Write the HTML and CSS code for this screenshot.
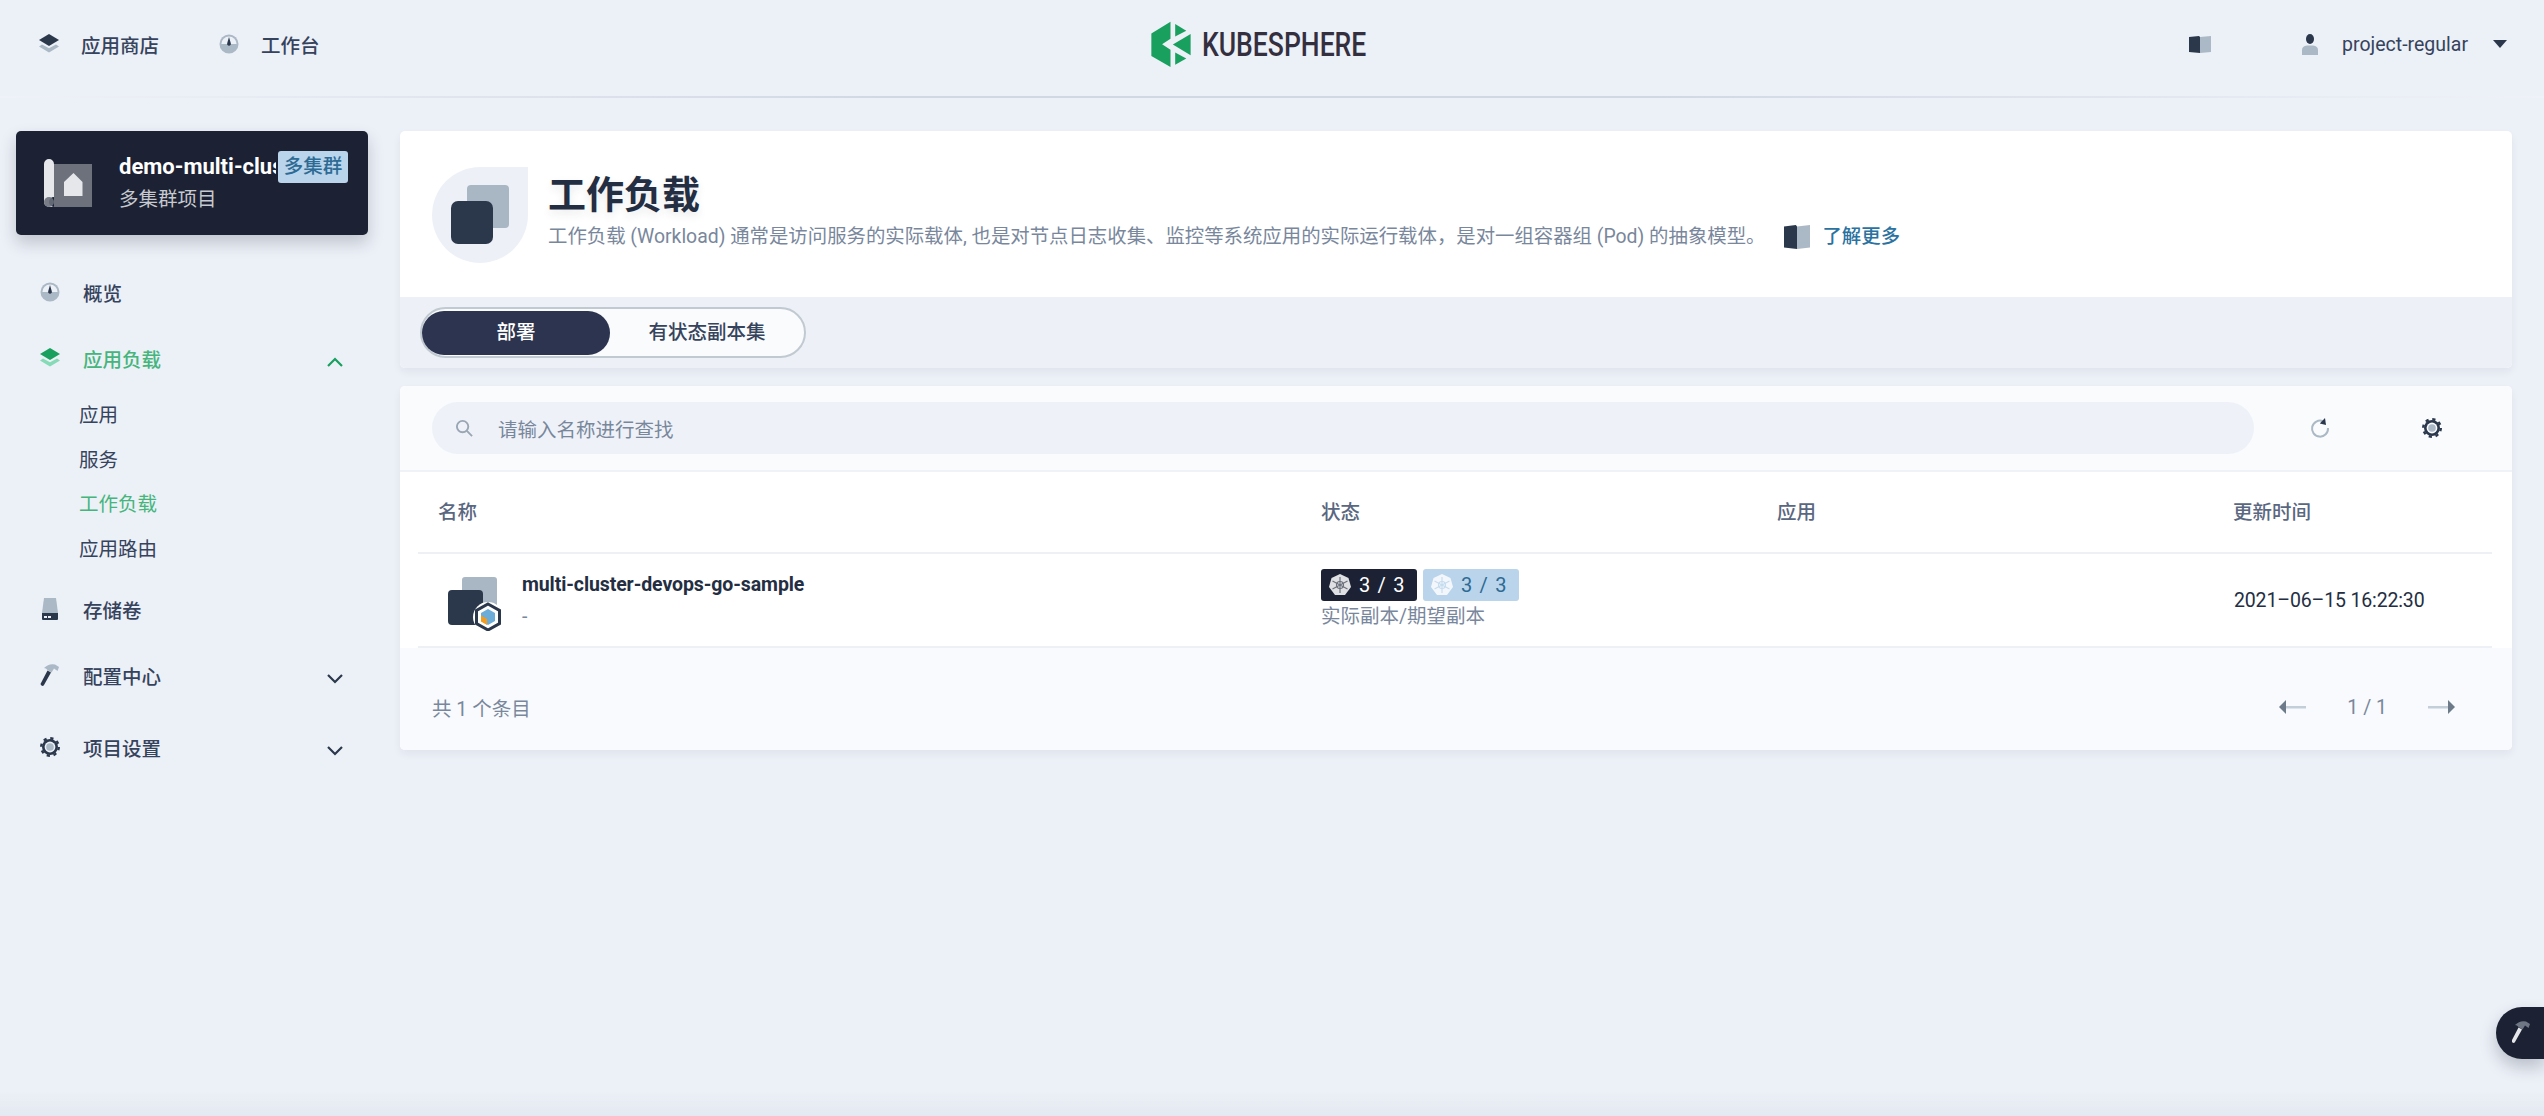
FILE: index.html
```html
<!DOCTYPE html>
<html lang="zh-CN">
<head>
    <meta charset="UTF-8">
    <title>工作负载 - KubeSphere</title>
    <link rel="stylesheet" href="styles.css">
</head>
<body>
    <svg class="defs" width="0" height="0">
        <symbol id="i-layers" viewBox="0 0 20 20">
            <path class="light" d="M3 10.6 10 14.2 17 10.6 20 12.4 10 18.6 0 12.4Z"/>
            <path class="dark" d="M10 0 20 6 10 12 0 6Z"/>
        </symbol>
        <symbol id="i-gauge" viewBox="0 0 20 20">
            <circle class="light" cx="10" cy="10" r="9.5"/>
            <path class="hole" d="M2.4 10a7.6 7.6 0 0 1 15.2 0Z"/>
            <path class="dark" d="M10 3 11.8 9.2a1.9 1.9 0 1 1-3.6 0Z"/>
        </symbol>
        <symbol id="i-book" viewBox="0 0 22 17" preserveAspectRatio="none">
            <path class="dark" d="M0 1 10 0 11 1V17L0 16Z"/>
            <path class="light" d="M11 1 22 0V16L11 17Z"/>
        </symbol>
        <symbol id="i-user" viewBox="0 0 16 21">
            <ellipse class="dark" cx="8" cy="5" rx="4" ry="5"/>
            <path class="light" d="M0 21V16Q0 12 5 11.500H11Q16 12 16 16V21Z"/>
        </symbol>
        <symbol id="i-disk" viewBox="0 0 16 22">
            <path class="light" d="M2 0H14L16 15H0Z"/>
            <path class="dark" d="M0 15H16V21Q16 22 15 22H1Q0 22 0 21Z"/>
            <path class="hole" d="M2 18H5V20H2ZM6 18H9V20H6Z"/>
        </symbol>
        <symbol id="i-hammer" viewBox="0 0 18 22">
            <path class="light" d="M3 4Q8-1 14 0.500L18 3 16.500 7 13 4.500 10.500 8.500 6.500 6Q5 4 3 4Z"/>
            <path class="dark" d="M6.500 6.500 10 8.500 3 21Q2 22.500 0.500 21.500T0 19Z"/>
        </symbol>
        <symbol id="i-gear" viewBox="0 0 20 20">
            <circle class="dark" cx="10" cy="10" r="8"/>
            <circle class="gear-teeth" cx="10" cy="10" r="8.800"/>
            <circle class="hole" cx="10" cy="10" r="5.400"/>
            <circle class="light" cx="10" cy="10" r="3.800"/>
        </symbol>
        <symbol id="i-wheel" viewBox="0 0 22 22">
            <path class="wheel-body" d="M11 0 19.500 4 22 13 16 21H6L0 13 2.500 4Z"/>
            <g class="wheel-spokes">
                <circle cx="11" cy="11" r="3.500"/>
                <path d="M11 3V19M3.500 7 18.500 15M18.500 7 3.500 15"/>
            </g>
        </symbol>
    </svg>

    <header class="topbar">
        <nav class="topbar-left">
            <a class="top-link"><svg class="icon-20"><use href="#i-layers"/></svg>应用商店</a>
            <a class="top-link"><svg class="icon-20"><use href="#i-gauge"/></svg>工作台</a>
        </nav>
        <div class="logo">
            <svg class="logo-mark" viewBox="150 66 122 140">
                <path d="M208 68 151 103V170L208 203V152L183 135 208 119Z"/>
                <path d="M222 75 255 95 222 112Z"/>
                <path d="M268 105V168L215 136Z"/>
                <path d="M222 160 255 178 222 196Z"/>
            </svg>
            <span class="logo-text">KUBESPHERE</span>
        </div>
        <div class="topbar-right">
            <svg class="icon-book"><use href="#i-book"/></svg>
            <svg class="icon-user"><use href="#i-user"/></svg>
            <span class="user-name">project-regular</span>
            <span class="caret"></span>
        </div>
    </header>

    <div class="page">
        <aside class="sidebar">
            <div class="project-card">
                <svg class="project-icon" viewBox="0 0 48 48">
                    <path fill="#6c717c" d="M10 5H48V48H10Z"/>
                    <path fill="#e6e7ea" d="M0 5a5 5 0 0 1 10 0V38H10a5 5 0 1 0 0 10H5a5 5 0 0 1-5-5Z"/>
                    <path fill="#6c717c" d="M5 38a5 5 0 0 1 5 5 5 5 0 0 1-5 5 5 5 0 0 1-5-5 5 5 0 0 1 5-5Z" opacity=".9"/>
                    <path fill="#e6e7ea" d="M20 23 29.500 14 38.500 23V37H20Z"/>
                </svg>
                <div class="project-text">
                    <div class="project-name">demo-multi-cluster</div>
                    <div class="project-desc">多集群项目</div>
                </div>
                <span class="project-tag">多集群</span>
            </div>

            <nav class="nav">
                <a class="nav-item"><svg class="icon-nav"><use href="#i-gauge"/></svg>概览</a>
                <a class="nav-item active">
                    <svg class="icon-nav"><use href="#i-layers"/></svg>应用负载
                    <svg class="chevron up" viewBox="0 0 16 10"><path d="M1 9 8 2 15 9"/></svg>
                </a>
                <div class="subnav">
                    <a class="sub-item">应用</a>
                    <a class="sub-item">服务</a>
                    <a class="sub-item active">工作负载</a>
                    <a class="sub-item">应用路由</a>
                </div>
                <a class="nav-item"><svg class="icon-nav"><use href="#i-disk"/></svg>存储卷</a>
                <a class="nav-item">
                    <svg class="icon-nav"><use href="#i-hammer"/></svg>配置中心
                    <svg class="chevron" viewBox="0 0 16 10"><path d="M1 1 8 8 15 1"/></svg>
                </a>
                <a class="nav-item nav-item-last">
                    <svg class="icon-nav"><use href="#i-gear"/></svg>项目设置
                    <svg class="chevron" viewBox="0 0 16 10"><path d="M1 1 8 8 15 1"/></svg>
                </a>
            </nav>
        </aside>

        <main class="content">
            <section class="banner">
                <div class="banner-head">
                    <div class="banner-icon">
                        <svg viewBox="0 0 58 60" width="58" height="60">
                            <rect fill="#a9b6c3" x="16" y="0" width="42" height="43" rx="4"/>
                            <rect fill="#2b384c" x="0" y="16" width="42" height="43" rx="7"/>
                        </svg>
                    </div>
                    <div class="banner-text">
                        <h1>工作负载</h1>
                        <p><span>工作负载 (Workload) 通常是访问服务的实际载体, 也是对节点日志收集、监控等系统应用的实际运行载体，是对一组容器组 (Pod) 的抽象模型。</span><svg class="learn-icon"><use href="#i-book"/></svg><a class="learn-more">了解更多</a></p>
                    </div>
                </div>
                <div class="tabs-band">
                    <div class="tabs">
                        <a class="tab active">部署</a>
                        <a class="tab">有状态副本集</a>
                    </div>
                </div>
            </section>

            <section class="table-card">
                <div class="toolbar">
                    <div class="search">
                        <svg class="search-icon" viewBox="0 0 20 20">
                            <circle cx="8" cy="8" r="6"/>
                            <path d="M12.500 12.500 18 18"/>
                        </svg>
                        <span>请输入名称进行查找</span>
                    </div>
                    <svg class="refresh" viewBox="0 0 20 20">
                        <path d="M13 3.200A8 8 0 1 0 18 10"/>
                        <path class="refresh-tip" d="M15 0 16 7 9.800 5.600Z"/>
                    </svg>
                    <svg class="icon-20 toolbar-gear"><use href="#i-gear"/></svg>
                </div>

                <div class="row row-head">
                    <div>名称</div>
                    <div>状态</div>
                    <div>应用</div>
                    <div>更新时间</div>
                </div>

                <div class="row row-body">
                    <div class="name-cell">
                        <svg class="workload-icon" viewBox="0 0 54 54">
                            <rect fill="#a9b6c3" x="14" y="0" width="35" height="36" rx="3"/>
                            <rect fill="#2b384c" x="0" y="13" width="35" height="35" rx="4"/>
                            <circle fill="#fff" cx="40" cy="40" r="15"/>
                            <path fill="#fff" stroke="#2b384c" stroke-width="3" d="M40 27 51.500 33.500V46.500L40 53 28.500 46.500V33.500Z"/>
                            <path fill="#6cacd9" d="M40 32 47 36V44L40 48 33 44V36Z"/>
                            <path fill="#f29b1f" d="M33 38.500 39 42V48L33 44.500Z"/>
                        </svg>
                        <div>
                            <div class="workload-name">multi-cluster-devops-go-sample</div>
                            <div class="workload-desc">-</div>
                        </div>
                    </div>
                    <div class="status-cell">
                        <div class="badges">
                            <span class="badge badge-dark"><svg class="wheel"><use href="#i-wheel"/></svg>3 / 3</span>
                            <span class="badge badge-light"><svg class="wheel"><use href="#i-wheel"/></svg>3 / 3</span>
                        </div>
                        <div class="status-note">实际副本/期望副本</div>
                    </div>
                    <div></div>
                    <div class="date-cell">2021–06–15 16:22:30</div>
                </div>

                <div class="table-foot">
                    <span>共 1 个条目</span>
                    <div class="pager">
                        <svg class="arrow" viewBox="0 0 27 14"><path class="arrow-line" d="M6 6H27V8.500H6Z"/><path class="arrow-head" d="M0 7 7 0V14Z"/></svg>
                        <span class="page-num">1 / 1</span>
                        <svg class="arrow" viewBox="0 0 27 14"><path class="arrow-line" d="M0 6H21V8.500H0Z"/><path class="arrow-head" d="M27 7 20 0V14Z"/></svg>
                    </div>
                </div>
            </section>
        </main>
    </div>

    <div class="float-tool">
        <svg viewBox="0 0 18 22" width="18" height="22">
            <path fill="#6f7684" d="M3 4Q8-1 14 0.500L18 3 16.500 7 13 4.500 10.500 8.500 6.500 6Q5 4 3 4Z"/>
            <path fill="#e4e6ea" d="M6.500 6.500 10 8.500 3 21Q2 22.500 0.500 21.500T0 19Z"/>
        </svg>
    </div>
</body>
</html>
```

FILE: styles.css
```css
* { margin: 0; padding: 0; box-sizing: border-box; }

html, body {
    height: 100%;
    overflow: hidden;
}

body {
    font-family: Roboto, "Noto Sans CJK SC", sans-serif;
    font-size: 19.5px;
    color: #36435c;
    background: #ecf0f7;
}

/* faint shade along the bottom of the window */
body::after {
    content: "";
    position: fixed;
    left: 0;
    right: 0;
    bottom: 0;
    height: 24px;
    background: linear-gradient(180deg, rgba(225, 230, 239, 0), #e4e9f1);
}

a { color: inherit; }

h1, p { font-weight: normal; }

.defs { position: absolute; }

/* two tone icons, the vars reach inside <use> */
.dark { fill: var(--icon-dark, #2b384c); }
.light { fill: var(--icon-light, #abb8c5); }
.hole { fill: var(--icon-hole, #ecf0f7); }

.gear-teeth {
    fill: none;
    stroke: var(--icon-dark, #2b384c);
    stroke-width: 2.4;
    stroke-dasharray: 3.2 3.71;
}

.icon-20 { width: 20px; height: 20px; flex: none; }
.icon-nav { width: 20px; height: 22px; flex: none; }

/* top bar */
.topbar {
    height: 98px;
    padding: 0 37px 8px 39px;
    display: grid;
    grid-template-columns: 1fr auto 1fr;
    align-items: center;
    border-bottom: 2px solid;
    border-image: linear-gradient(90deg, #eff2f8 0%, #d2d8e3 35%, #d2d8e3 65%, #eff2f8 100%) 1;
}

.topbar-left {
    display: flex;
    gap: 60px;
}

.top-link {
    display: flex;
    align-items: center;
    gap: 22px;
    font-weight: 500;
}

.logo {
    display: flex;
    align-items: center;
    gap: 10px;
    margin: 0 26px 0 -3px;
}

.logo-mark {
    width: 41px;
    height: 47px;
    fill: #19a05f;
}

.logo-text {
    width: 165px;
    font-size: 34px;
    font-weight: 500;
    line-height: 1;
    color: #342f3f;
    white-space: nowrap;
    transform: scaleX(.78);
    transform-origin: left center;
}

.topbar-right {
    display: flex;
    align-items: center;
    justify-content: flex-end;
}

.icon-book { width: 22px; height: 17px; flex: none; }

.icon-user {
    width: 16px;
    height: 21px;
    margin-left: 91px;
}

.user-name { margin-left: 24px; }

.caret {
    margin-left: 25px;
    border: 7.5px solid transparent;
    border-top: 8px solid #2b384c;
    border-bottom: 0;
}

/* page */
.page {
    display: flex;
    padding: 33px 32px 0 16px;
}

.sidebar {
    width: 352px;
    margin-right: 32px;
    flex: none;
}

.project-card {
    position: relative;
    height: 104px;
    padding: 0 28px;
    display: flex;
    align-items: center;
    gap: 27px;
    background: #1c2233;
    border-radius: 5px;
    box-shadow: 0 8px 16px rgba(36, 46, 66, .22);
}

.project-icon { width: 48px; height: 48px; flex: none; }

.project-text {
    width: 157px;
    overflow: hidden;
    white-space: nowrap;
}

.project-name {
    font-size: 22px;
    font-weight: 700;
    line-height: 32px;
    color: #fff;
}

.project-desc {
    margin-top: 2px;
    line-height: 30px;
    color: #c6c9cf;
}

.project-tag {
    position: absolute;
    top: 20px;
    right: 20px;
    width: 70px;
    height: 32px;
    font-weight: 500;
    line-height: 31px;
    text-align: center;
    color: #2d6a94;
    background: #b9d4eb;
    border-radius: 3px;
}

/* side nav */
.nav { padding: 13px 0 0 24px; }

.nav-item {
    height: 44px;
    margin-top: 22px;
    display: flex;
    align-items: center;
    gap: 23px;
    font-weight: 500;
}

.nav-item-last { margin-top: 28px; }

.nav-item.active {
    --icon-dark: #19a05f;
    --icon-light: #84dbb5;
    color: #46b57c;
}

.chevron {
    width: 16px;
    height: 10px;
    margin: 7px 25px 0 auto;
    fill: none;
    stroke: #2b384c;
    stroke-width: 2.2;
}

.chevron.up { stroke: #19a05f; }

.subnav {
    margin: 14px 0 -7px;
    padding-left: 55px;
}

.sub-item {
    display: block;
    height: 44.500px;
    line-height: 44px;
    margin-left: -16px;
}

.sub-item.active { color: #46b57c; }

/* content */
.content {
    flex: 1;
    min-width: 0;
}

.banner {
    background: #fff;
    border-radius: 5px;
    box-shadow: 0 4px 8px rgba(36, 46, 66, .06);
    overflow: hidden;
}

.banner-head {
    height: 166px;
    padding: 36px 32px 0;
    display: flex;
    gap: 20px;
}

.banner-icon {
    width: 96px;
    height: 96px;
    padding: 18px 0 0 19px;
    flex: none;
    background: #edf1f7;
    border-radius: 50% 0 50% 50%;
}

.banner-text h1 {
    margin-top: 6px;
    font-size: 38px;
    font-weight: 700;
    line-height: 44px;
    color: #242e42;
    text-shadow: 0 4px 8px rgba(36, 46, 66, .1);
}

.banner-text p {
    margin-top: 5px;
    font-size: 19.400px;
    line-height: 30px;
    color: #79879c;
    display: flex;
    align-items: center;
    white-space: nowrap;
}

.learn-icon {
    width: 26px;
    height: 24px;
    margin-left: 19px;
    flex: none;
}

.learn-more {
    margin-left: 12px;
    font-weight: 500;
    color: #2b72a0;
}

.tabs-band {
    height: 71px;
    padding: 10px 20px;
    background: #edf1f7;
}

.tabs {
    width: 386px;
    height: 51px;
    padding: 2px 0;
    display: flex;
    align-items: center;
    background: #f9fbfd;
    border: 2px solid #c1c9d1;
    border-radius: 26px;
}

.tab {
    flex: 1;
    font-weight: 500;
    line-height: 44px;
    text-align: center;
}

.tab.active {
    flex: none;
    width: 188px;
    color: #fff;
    background: #2c3450;
    border-radius: 22px;
}

/* table */
.table-card {
    margin-top: 18px;
    background: #fff;
    border-radius: 5px;
    box-shadow: 0 4px 8px rgba(36, 46, 66, .06);
    overflow: hidden;
}

.toolbar {
    --icon-hole: #f9fbfd;
    height: 86px;
    padding: 0 70px 0 32px;
    display: flex;
    align-items: center;
    background: #f9fbfd;
    border-bottom: 2px solid #eff3f8;
}

.search {
    width: 1822px;
    height: 52px;
    padding-left: 23px;
    display: flex;
    align-items: center;
    gap: 24px;
    color: #79879c;
    background: #eef2f8;
    border-radius: 26px;
}

.search-icon {
    width: 19px;
    height: 19px;
    fill: none;
    stroke: #9aa6b4;
    stroke-width: 2;
}

.refresh {
    width: 20px;
    height: 20px;
    margin-left: 56px;
    fill: none;
    stroke: #abb8c5;
    stroke-width: 2;
}

.refresh-tip { fill: #2b384c; stroke: none; }

.toolbar-gear { margin-left: auto; }

.row {
    margin: 0 20px 0 18px;
    display: grid;
    grid-template-columns: 883px 456px 456px 1fr;
    padding-left: 20px;
    border-bottom: 2px solid #edf1f6;
}

.row-head {
    height: 82px;
    padding-bottom: 3px;
    align-items: center;
    font-weight: 500;
    color: #5a6780;
}

.row-body {
    height: 94px;
    align-items: center;
}

.name-cell {
    display: flex;
    align-items: center;
    gap: 20px;
    margin-left: 10px;
}

.workload-icon { width: 54px; height: 54px; flex: none; margin-top: 8px; }

.workload-name {
    font-weight: 700;
    line-height: 28px;
    letter-spacing: -.1px;
    color: #242e42;
}

.workload-desc {
    margin-top: 4px;
    line-height: 28px;
    color: #79879c;
}

.name-cell > div { padding-top: 2px; }

.badges {
    display: flex;
    gap: 6px;
}

.badge {
    width: 96px;
    height: 32px;
    padding-left: 8px;
    display: flex;
    align-items: center;
    gap: 8px;
    font-size: 20px;
    border-radius: 3px;
    letter-spacing: 1.2px;
}

.badge-dark {
    --wheel-body: #dfe0e3;
    --wheel-line: #6c717c;
    color: #fff;
    background: #1c2233;
}

.badge-light {
    --wheel-body: #f3f7fb;
    --wheel-line: #c6dcef;
    color: #2d6a94;
    background: #b9d4eb;
}

.wheel { width: 22px; height: 22px; flex: none; }

.wheel-body { fill: var(--wheel-body); }

.wheel-spokes {
    fill: none;
    stroke: var(--wheel-line);
    stroke-width: 1.2;
}

.status-note {
    margin-top: 2px;
    line-height: 28px;
    color: #79879c;
}

.date-cell {
    margin-left: 1px;
    letter-spacing: -.15px;
    color: #242e42;
}

.table-foot {
    height: 102px;
    padding: 16px 32px 0;
    display: flex;
    align-items: center;
    justify-content: space-between;
    color: #79879c;
    background: #f8fafd;
}

.pager {
    display: flex;
    align-items: center;
    gap: 41px;
    padding-right: 25px;
}

.arrow { width: 27px; height: 14px; }
.arrow-line { fill: #c4ced9; }
.arrow-head { fill: #6c7a8a; }

/* floating tool button */
.float-tool {
    position: fixed;
    right: 0;
    bottom: 57px;
    width: 48px;
    height: 52px;
    padding: 14px 0 0 16px;
    background: #1c2233;
    border-radius: 26px 0 0 26px;
    box-shadow: 0 8px 16px rgba(36, 46, 66, .25);
}
```
